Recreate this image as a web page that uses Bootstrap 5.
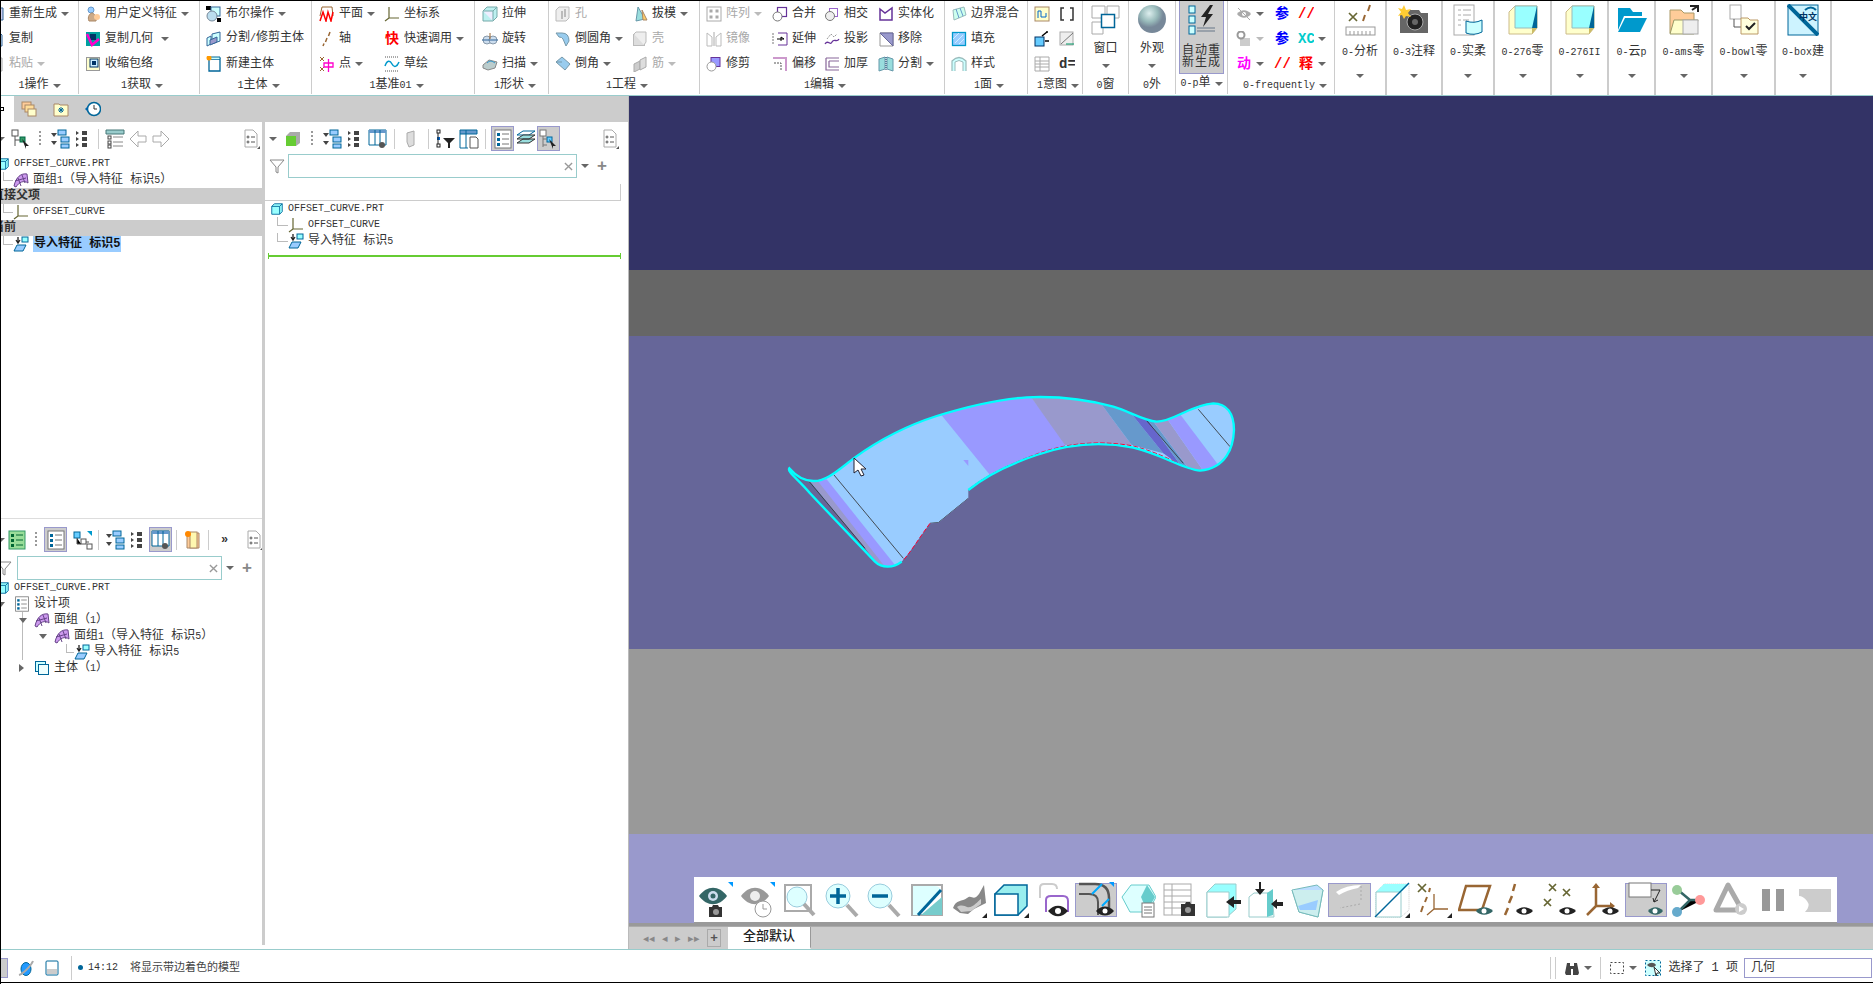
<!DOCTYPE html>
<html lang="zh">
<head>
<meta charset="utf-8">
<title>OFFSET_CURVE</title>
<link href="https://cdn.jsdelivr.net/npm/bootstrap@5.3.0/dist/css/bootstrap.min.css" rel="stylesheet">
<style>
html,body{height:100%;margin:0;overflow:hidden}
body{font:12px/16px "Liberation Mono","Noto Sans CJK SC",monospace;color:#333;background:#fff}
.lat{font-size:10px}
.shell{width:1873px;height:984px;border-left:1px solid #000;border-top:1px solid #000;overflow:hidden}
.ic{width:16px;height:16px;flex:none;display:block}
.ic-sm{width:14px;height:14px;flex:none;display:block}
.ic-tool{width:20px;height:20px;flex:none;display:block}
.ic-big{width:32px;height:32px;flex:none;display:block}
.ic-cv{width:36px;height:36px;flex:none;display:block}
.tri{display:inline-block;flex:none;width:0;height:0;border-left:4px solid transparent;border-right:4px solid transparent;border-top:4px solid #666}
.off{color:#a9a9a9}
.off .tri,.tri.off{border-top-color:#bbb}

.ribbon{height:95px;border-bottom:1px solid #99cccc;background:#fff;overflow:hidden}
.rg{height:93px;border-right:1px solid #ccc;flex:none;overflow:hidden}
.rg-body{height:75px;display:grid;grid-template-rows:25px 25px 25px;grid-auto-flow:column;white-space:nowrap}
.rg-foot{height:19px;display:flex;align-items:center;justify-content:center;gap:4px;white-space:nowrap}
.rit{display:flex;align-items:center;gap:4px;min-width:0}
.g1{width:78px}.g1 .rg-body{grid-template-columns:78px;margin-left:-12px}
.g2{width:121px;padding-left:6px}.g3{width:112px;padding-left:6px}
.g4{width:163px;padding-left:7px}.g4 .rg-body{grid-template-columns:65px 90px}
.g5{width:74px;padding-left:7px}
.g6{width:151px;padding-left:6px}.g6 .rg-body{grid-template-columns:77px 68px}
.g7{width:245px;padding-left:6px}.g7 .rg-body{grid-template-columns:66px 52px 54px 72px}
.g8{width:83px;padding-left:6px}
.g9{width:55px;padding-left:6px}.g9 .rg-body{grid-template-columns:25px 24px}
.g10{width:46px}.g11{width:47px}.g12{width:52px}
.g14{width:107px;padding-left:8px}.g14 .rg-body{grid-template-columns:38px 24px 30px;font-weight:700}
.rcol{height:75px;display:flex;flex-direction:column;align-items:center;line-height:13px;text-align:center}
.rcol-on{background:#ccc;border:1px solid #9999cc;border-top:0;margin:0 3px;height:73px;font-size:12px;line-height:12px;letter-spacing:1px}
.rcol .ic-big{margin-top:3px;margin-bottom:7px}
.rcol-on .ic-big{margin-bottom:9px}
.rb{height:95px;flex:none;border-right:2px solid #ccc;display:flex;flex-direction:column;align-items:center;padding-top:3px;white-space:nowrap}
.rb span.lbl{margin:8px 0 13px;line-height:16px}
.w52{width:52px}.w56{width:56px}.w57{width:57px}.w47{width:47px}.w63{width:63px}
.c-red{color:#f00}.c-blue{color:#00f}.c-mag{color:#f0f}.c-cy{color:#0cc}
.glyph{width:16px;text-align:center;font-weight:700;flex:none;font-size:14px;overflow:hidden}

.midarea{height:853px}
.sidecol{width:628px;flex:none;background:#fff;border-right:1px solid #bbb}
.tabstrip{height:26px;background:#ccc;align-items:center;gap:12px;padding-left:5px}
.tabstub{width:13px;height:26px;background:#fff;margin-left:-5px;margin-right:-5px;position:relative;display:flex;align-items:center}
.tabstub i{display:block;width:4px;height:4px;border:1px solid #000;margin-left:-1px}
.vbar{width:3px;flex:none;background:#ccc;height:823px}
.pane-a{width:261px;flex:none}
.pane-b{flex:1 1 auto;padding-right:7px}
.pane-b .tsep{margin:0 5px}
.upper{height:397px;border-bottom:1px solid #ddd;overflow:hidden}
.strip{height:33px;display:flex;align-items:center;overflow:hidden}
.strip-tall{height:34px}
.cell{width:23px;flex:none;display:flex;justify-content:center;align-items:center}
.cell.on{height:25px;background:#ccc;border:1px solid #9999cc}
.cell.nar{width:16px}
.dots{width:2px;height:16px;flex:none;margin:0 7px;background:repeating-linear-gradient(#999 0 2px,transparent 2px 4px)}
.tsep{width:1px;height:20px;background:#ccc;flex:none;margin:0 4px}
.flt{height:24px;display:flex;align-items:center}
.flt-up{margin-top:-1px}
.fbox{height:100%;border:1px solid #99cccc;display:flex;align-items:center;justify-content:flex-end;padding-right:3px;flex:none}
.fbox-a{width:205px;margin-left:5px}
.fbox-b{width:289px;margin-left:3px}
.plus{font:700 17px/16px "Liberation Sans",sans-serif;color:#888}
.emptyrow{height:17px;margin-top:6px;border-right:1px solid #ccc;border-bottom:1px solid #ccc}
.tr{height:16px;display:flex;align-items:center;white-space:nowrap;position:relative}
.tr>svg{margin-right:4px}
.hd{background:#ccc;font-weight:700;overflow:hidden}
.hd span{margin-left:-9px}
.in0{padding-left:0}.in1{padding-left:13px}.in2{padding-left:33px}.in3{padding-left:53px}.in4{padding-left:73px}
.in5{padding-left:23px}.in6{padding-left:5px}
.lnk{width:8px;height:9px;margin-left:-8px;margin-top:-7px;border-left:1px solid #bbb;border-bottom:1px solid #bbb;flex:none}
.lnk-far{width:10px;margin-left:-11px}
.lnk-wide{margin-left:-11px;width:11px}
.twi{width:0;height:0;flex:none;margin-left:-15px;margin-right:7px;border-left:4px solid transparent;border-right:4px solid transparent;border-top:5px solid #666}
.twi.shut{border-top:4px solid transparent;border-bottom:4px solid transparent;border-left:5px solid #666;border-right:0;margin-right:10px}
.twi-first{margin-left:-17px;margin-right:9px}
.guide{background:linear-gradient(#bbb,#bbb) 21px 0/1px 100% no-repeat}
.sel{background:#99ccff;color:#111;font-weight:700;padding:0 1px}
.greenline{height:2px;background:#66cc33;margin:6px 0 0 3px;position:relative}
.greenline::before,.greenline::after{content:"";position:absolute;top:-2px;width:1px;height:6px;background:#66cc33}
.greenline::before{left:0}.greenline::after{right:0}
.trim-l{margin-left:-4px}
.prt-a{margin-left:-5px}

.viewcol{flex:1 1 auto;min-width:0}
.vport{height:830px;position:relative;overflow:hidden;border-bottom:3px solid #999}
.bd1{height:174px;background:#333366}.bd2{height:66px;background:#666666}.bd3{height:313px;background:#666699}.bd4{height:185px;background:#999999}.bd5{height:89px;background:#9999cc}
.modelpic{position:absolute;left:141px;top:284px;width:480px;height:200px}
.ptr{position:absolute;left:224px;top:361px;width:14px;height:20px}
.floatbar{position:absolute;left:65px;top:781px;width:1143px;height:47px;background:#fff;display:flex;align-items:center;border-bottom:2px solid #999}
.fb{width:42.3px;height:34px;display:flex;align-items:center;justify-content:center;flex:none}
.fb.on{background:#ccc;border:1px solid #9999cc}
.tabrow{height:23px;background:#ccc;border-top:1px solid #aaa;align-items:stretch}
.nbtns{width:99px;flex:none;display:flex;align-items:center;justify-content:flex-end;gap:7px;color:#888;padding-right:7px;font:11px/10px "Liberation Sans",sans-serif}
.addt{width:14px;height:18px;border:1px solid #aaa;text-align:center;font:700 13px/15px "Liberation Sans",sans-serif;color:#555}
.tabcur{width:83px;flex:none;background:#fff;text-align:center;font-size:13px;line-height:19px;color:#222;font-weight:500;border-right:1px solid #999;border-bottom:2px solid #fff}

.statusbar{height:34px;border-top:1px solid #99cccc;border-bottom:1px solid #000;background:#fff;align-items:center;white-space:nowrap;font-size:11px;padding-top:3px}
.sl{width:71px;height:24px;border-right:1px solid #ccc;display:flex;align-items:center;gap:10px;flex:none;padding-left:16px;position:relative}
.sstub{width:8px;height:20px;margin-left:-17px;background:#ccc;border:1px solid #9999cc;border-left:0;flex:none}
.sdot{width:5px;height:5px;border-radius:50%;background:#006699;margin:0 5px 0 6px;flex:none}
.smsg{margin-left:12px;color:#444}
.vs{width:1px;height:22px;background:#ccc;flex:none}
.sinput{width:128px;height:20px;border:1px solid #9999cc;font-size:12px;line-height:18px;padding-left:6px;flex:none;margin:0 1px 0 6px}
.stxt{font-size:12px;flex:none;margin-left:7px}
</style>
</head>
<body>
<svg width="0" height="0" class="position-absolute">
<defs>
<symbol id="cube" viewBox="0 0 16 16"><path d="M2 5 5 2h9v9l-3 3H2z" fill="#99ffff" stroke="#006699"/><path d="M2 5h9v9M11 5l3-3" fill="none" stroke="#006699"/></symbol>
<symbol id="cubes" viewBox="0 0 16 16"><rect x="1.500" y="1.500" width="10" height="10" fill="#ccffff" stroke="#006699"/><rect x="4.500" y="4.500" width="10" height="10" fill="#eeffff" stroke="#006699"/></symbol>
<symbol id="regen" viewBox="0 0 16 16"><path d="M2 2h12v12H2z" fill="#cce" stroke="#369"/></symbol>
<symbol id="doc" viewBox="0 0 16 16"><path d="M3 1h7l3 3v11H3z" fill="#def" stroke="#369"/><path d="M5 6h6M5 9h6M5 12h6" stroke="#369"/></symbol>
<symbol id="paste" viewBox="0 0 16 16"><path d="M3 2h10v13H3z" fill="#eee" stroke="#aaa"/><path d="M5 6h6M5 9h6M5 12h6" stroke="#bbb"/></symbol>
<symbol id="udf" viewBox="0 0 16 16"><circle cx="6" cy="4" r="3" fill="#9cf" stroke="#69c"/><path d="M4 15c-2-4 1-8 3-8s5 4 4 8z" fill="#ca8" stroke="#a86"/><circle cx="12" cy="11" r="3" fill="#fc9"/></symbol>
<symbol id="cgeom" viewBox="0 0 16 16"><rect x="1" y="1" width="14" height="14" fill="#00a0a0"/><rect x="5" y="3" width="6" height="6" fill="#036"/><path d="M2 3l5 11 7-6" fill="none" stroke="#f0c" stroke-width="2.500"/></symbol>
<symbol id="shrink" viewBox="0 0 16 16"><rect x="1.500" y="1.500" width="13" height="13" fill="#ffffcc" stroke="#999"/><rect x="5" y="3" width="8" height="8" fill="#cef" stroke="#036"/><rect x="7" y="5" width="4" height="4" fill="#036"/></symbol>
<symbol id="bool" viewBox="0 0 16 16"><rect x="0" y="0" width="5" height="4" fill="#000"/><rect x="11" y="12" width="4" height="4" fill="#000"/><rect x="5" y="1" width="9" height="9" fill="#cff" stroke="#369"/><circle cx="6" cy="10" r="5" fill="#bde" stroke="#789"/></symbol>
<symbol id="split" viewBox="0 0 16 16"><path d="M1 7l4-2v8l-4 2z M6 3l8-2v9l-8 3z" fill="#cff" stroke="#369"/><path d="M4 9l7-3v5l-7 3z" fill="#99c" stroke="#369"/></symbol>
<symbol id="newb" viewBox="0 0 16 16"><path d="M3 3h11v12H3z" fill="#fff" stroke="#069" stroke-width="1.300"/><path d="M3 3l2-2h9v2" fill="#cff" stroke="#069"/><circle cx="3" cy="2" r="2.500" fill="#f90"/></symbol>
<symbol id="plane" viewBox="0 0 16 16"><path d="M3 1h10l1 9M3 1L1 10" fill="none" stroke="#963"/><path d="M1 15 4 6l3 9 2-9 3 9 2-9" fill="none" stroke="#f00" stroke-width="1.500"/></symbol>
<symbol id="csys" viewBox="0 0 16 16"><path d="M5 1v11H15M5 12l-4 3" fill="none" stroke="#663" stroke-width="1.200"/></symbol>
<symbol id="axis" viewBox="0 0 16 16"><path d="M11 1 9.500 5M8 7 6.500 11M5 12.500 4 15" stroke="#963" stroke-width="1.500"/></symbol>
<symbol id="point" viewBox="0 0 16 16"><path d="M1 1l4 4M5 1 1 5M1 11l4 4M5 11l-4 4" stroke="#963"/><path d="M5 7h9v4H5z M9.500 3v13" fill="none" stroke="#f0c" stroke-width="1.300"/></symbol>
<symbol id="sketch" viewBox="0 0 16 16"><path d="M1 1h14M1 15h14" stroke="#555" stroke-dasharray="1 1"/><path d="M1 10c2-6 5-6 7-2s5 3 7-2" fill="none" stroke="#09c" stroke-width="1.500"/></symbol>
<symbol id="extr" viewBox="0 0 16 16"><path d="M1 5 5 1h10v10l-4 4H1z" fill="#bdf0f0" stroke="#7aa"/><path d="M1 5h10v10M11 5l4-4" fill="#eef" stroke="#7aa"/></symbol>
<symbol id="rev" viewBox="0 0 16 16"><ellipse cx="5" cy="9" rx="4" ry="4" fill="#cde" stroke="#89a"/><ellipse cx="11" cy="9" rx="4" ry="4" fill="#cde" stroke="#89a"/><path d="M0 9h16" stroke="#369"/><path d="M8 2v6" stroke="#963"/></symbol>
<symbol id="sweep" viewBox="0 0 16 16"><path d="M1 9l6-5 8 2-2 6-7 2-5-2z" fill="#bcc" stroke="#888"/><path d="M5 7c3-3 5-2 8 0" fill="none" stroke="#39c"/></symbol>
<symbol id="hole" viewBox="0 0 16 16"><path d="M1 4l3-3h10v11l-3 3H1z" fill="#eee" stroke="#bbb"/><path d="M7 5v8M10 3v8" stroke="#bbb" stroke-width="2"/></symbol>
<symbol id="draft" viewBox="0 0 16 16"><path d="M6 1l7 12-9 2z" fill="#9dd" stroke="#69a"/><path d="M10 4l5 10h-4z" fill="#fc6" stroke="#a86"/></symbol>
<symbol id="round" viewBox="0 0 16 16"><path d="M1 2h6q7 0 7 8l-3 5-3-7q-1-2-4-2z" fill="#9ce" stroke="#79a"/></symbol>
<symbol id="cham" viewBox="0 0 16 16"><path d="M1 6l6-5 8 7-5 6z" fill="#9ce" stroke="#79a"/><path d="M1 6h6" stroke="#79a"/></symbol>
<symbol id="shell" viewBox="0 0 16 16"><rect x="1.500" y="3.500" width="11" height="11" fill="#ddd" stroke="#bbb"/><path d="M2 3l2-2h10v10l-2 3" fill="#eee" stroke="#bbb"/></symbol>
<symbol id="rib" viewBox="0 0 16 16"><path d="M2 8l6-3v8l-6 3z" fill="#ccc" stroke="#aaa"/><path d="M8 4l6-3v10l-6 3z" fill="#ddd" stroke="#aaa"/></symbol>
<symbol id="pat" viewBox="0 0 16 16"><rect x="1" y="1" width="14" height="14" fill="#fff" stroke="#aaa"/><g fill="#aaa"><rect x="3.500" y="3.500" width="3" height="3"/><rect x="9.500" y="3.500" width="3" height="3"/><rect x="3.500" y="9.500" width="3" height="3"/><rect x="9.500" y="9.500" width="3" height="3"/></g></symbol>
<symbol id="mirr" viewBox="0 0 16 16"><path d="M1 2l5 4v9H1zM15 2l-5 4v9h5z" fill="#fff" stroke="#bbb"/><path d="M8 1v14" stroke="#aaa"/></symbol>
<symbol id="merge" viewBox="0 0 16 16"><rect x="5.500" y="1.500" width="9" height="9" fill="#fff" stroke="#639" stroke-width="1.200"/><circle cx="5.500" cy="10.500" r="4.500" fill="#fff" stroke="#777"/></symbol>
<symbol id="inter" viewBox="0 0 16 16"><rect x="5.500" y="2.500" width="8" height="8" fill="#fff" stroke="#96c"/><circle cx="6" cy="10" r="4.500" fill="#eee" stroke="#777"/></symbol>
<symbol id="trim" viewBox="0 0 16 16"><rect x="5" y="1.500" width="9" height="9" fill="#99f" stroke="#639"/><circle cx="5.500" cy="10.500" r="4.500" fill="#fff" stroke="#999"/></symbol>
<symbol id="ext" viewBox="0 0 16 16"><path d="M6 2h9v12H6" fill="none" stroke="#639"/><path d="M1 2v12" stroke="#777" stroke-dasharray="2 1"/><path d="M5 8h7l-3-2v4" fill="none" stroke="#000"/></symbol>
<symbol id="proj" viewBox="0 0 16 16"><path d="M1 13c3-5 5 2 7-2s5 1 7-3" fill="none" stroke="#639" stroke-width="1.300"/><path d="M3 8l4-5 3 3 3-3" fill="none" stroke="#999" stroke-dasharray="2 1"/></symbol>
<symbol id="offs" viewBox="0 0 16 16"><path d="M1 2h13v13" fill="none" stroke="#c9c" stroke-width="2"/><path d="M2 7h7v8" fill="none" stroke="#555" stroke-dasharray="2 1"/></symbol>
<symbol id="thick" viewBox="0 0 16 16"><path d="M2 2h13M2 2v12h13M5 5h10M5 5v6h10" fill="none" stroke="#869" stroke-width="1.200"/></symbol>
<symbol id="solid" viewBox="0 0 16 16"><path d="M2 3l5 4 7-5v12H2z" fill="#fff" stroke="#639" stroke-width="1.500"/></symbol>
<symbol id="remv" viewBox="0 0 16 16"><path d="M2 2h13v13H2z" fill="#fff" stroke="#999"/><path d="M2 2h13v13z" fill="#99c" stroke="#669"/></symbol>
<symbol id="splt" viewBox="0 0 16 16"><path d="M1 3l6-2v12l-6 2zM9 1l6 2v12l-6-2z" fill="#9dd" stroke="#69a"/><path d="M8 1v14" stroke="#036" stroke-dasharray="1 1"/></symbol>
<symbol id="blend" viewBox="0 0 16 16"><path d="M2 4l11-3 2 8-12 5z" fill="#cfe" stroke="#9bb"/><path d="M5 3l3 9M9 2l3 8" stroke="#69c"/></symbol>
<symbol id="fill" viewBox="0 0 16 16"><rect x="1.500" y="1.500" width="13" height="13" fill="#9cf" stroke="#09c" stroke-width="1.300"/><path d="M2 8l6-6M4 12l8-8M8 13l5-5" stroke="#cef"/></symbol>
<symbol id="style" viewBox="0 0 16 16"><path d="M1 15V5q7-7 14 0v10" fill="#cff" stroke="#9bb" stroke-width="1.200"/><path d="M4 15V6q4-3 8 0v9" fill="#fff" stroke="#9bb"/></symbol>
<symbol id="sk1" viewBox="0 0 16 16"><rect x="1" y="1" width="14" height="14" fill="#ffc" stroke="#a86"/><path d="M4 12V5h3v6h5V7" fill="none" stroke="#06c"/></symbol>
<symbol id="brk" viewBox="0 0 16 16"><path d="M5 2H2v12h3M11 2h3v12h-3" fill="none" stroke="#333" stroke-width="1.500"/></symbol>
<symbol id="mv" viewBox="0 0 16 16"><rect x="1" y="6" width="9" height="9" fill="#6cf" stroke="#036"/><path d="M8 5l5-4M12 1l2 0M11 10h4" stroke="#000" stroke-width="1.500"/></symbol>
<symbol id="rel" viewBox="0 0 16 16"><rect x="1" y="1" width="13" height="13" fill="#eee" stroke="#aaa"/><path d="M2 13 14 2" stroke="#777"/><path d="M7 13h8" stroke="#096"/></symbol>
<symbol id="tbl" viewBox="0 0 16 16"><path d="M1 1h14v14H1zM1 5h14M1 8h14M1 11h14M6 1v14" fill="#fff" stroke="#aaa"/></symbol>
<symbol id="ws" viewBox="0 0 32 32"><path d="M2 2h13v12H2zM17 2h12v12H17zM2 18h11v12H2z" fill="#fff" stroke="#aaa"/><rect x="11.500" y="10.500" width="13" height="13" fill="#fff" stroke="#069" stroke-width="1.500"/></symbol>
<symbol id="sph" viewBox="0 0 32 32"><defs><radialGradient id="sg" cx=".4" cy=".3"><stop offset="0" stop-color="#dee"/><stop offset=".6" stop-color="#9bb"/><stop offset="1" stop-color="#789"/></radialGradient></defs><circle cx="16" cy="15" r="14" fill="url(#sg)"/></symbol>
<symbol id="auto" viewBox="0 0 32 32"><g fill="#cff" stroke="#069"><rect x="3" y="2" width="6" height="7"/><rect x="3" y="12" width="6" height="7"/><rect x="3" y="22" width="6" height="8"/></g><path d="M24 1 15 13h5l-3 10 10-13h-5l5-9z" fill="#222"/><path d="M11 27h18M11 24h18" stroke="#678"/></symbol>
<symbol id="eyex" viewBox="0 0 16 16"><path d="M1 8c4-5 10-5 14 0-4 5-10 5-14 0z" fill="#aaa"/><circle cx="8" cy="8" r="2" fill="#fff"/><path d="M2 2l12 12" stroke="#aaa"/></symbol>
<symbol id="mdis" viewBox="0 0 16 16"><rect x="4" y="7" width="10" height="8" fill="#ccc"/><circle cx="5" cy="4" r="3.500" fill="none" stroke="#999" stroke-width="2"/></symbol>
<symbol id="ana" viewBox="0 0 32 32"><path d="M5 9l8 8M13 9l-8 8" stroke="#663" stroke-width="1.700"/><path d="M26 1l-2 6M21 11l-2 6" stroke="#963" stroke-width="2"/><rect x="2" y="23" width="29" height="8" fill="#fff" stroke="#999"/><path d="M6 27v4M10 27v4M14 27v4M18 27v4M22 27v4M26 27v4" stroke="#999"/></symbol>
<symbol id="cam" viewBox="0 0 32 32"><path d="M2 9h7l3-3h9l2 3h7v20H2z" fill="#666"/><circle cx="17" cy="18" r="8" fill="#222" stroke="#aaa"/><circle cx="17" cy="18" r="3" fill="#666"/><path d="M6 1l2 5 5-1-3 4 3 4-5-1-2 3-2-4-4 1 3-4-3-4 4 1z" fill="#fc3"/></symbol>
<symbol id="rep" viewBox="0 0 32 32"><rect x="2" y="1" width="20" height="30" fill="#fff" stroke="#aaa"/><path d="M6 6h3M11 6h8M6 11h3M11 11h8M6 16h3M11 16h6M6 21h3" stroke="#aaa"/><path d="M14 17q8 3 16-1v12q-8 4-16 1z" fill="#cff" stroke="#069"/></symbol>
<symbol id="bx" viewBox="0 0 32 32"><path d="M2 8l6-6h22v22l-5 6H2z" fill="#ffffcc" stroke="#cb8"/><path d="M8 2h22v22H8z" fill="#9ff" stroke="#9bb"/><path d="M25 24l5 0v-22" fill="#069"/><path d="M25 24h5l-5 6z" fill="#cb6"/></symbol>
<symbol id="fold" viewBox="0 0 32 32"><path d="M2 4h12l3 4h9v4H8L2 26z" fill="#09c"/><path d="M9 14h22l-7 14H2z" fill="#09c"/></symbol>
<symbol id="fdx" viewBox="0 0 32 32"><path d="M2 6h11l3 3h10v20H2z" fill="#fc9" stroke="#a96"/><path d="M2 30l4-14h24l-4 14z" fill="#ffc" stroke="#996"/><rect x="15" y="16" width="15" height="14" fill="#eee" stroke="#aaa"/><path d="M22 2h8v6M30 2l-6 4" fill="none" stroke="#222" stroke-width="2"/></symbol>
<symbol id="fdc" viewBox="0 0 32 32"><rect x="2" y="1" width="11" height="14" fill="#fff" stroke="#aaa"/><path d="M6 15v8h8" fill="none" stroke="#555"/><path d="M13 14h7l2 2h8v14H13z" fill="#ffd" stroke="#b96"/><path d="M18 22l3 3 6-6" fill="none" stroke="#222" stroke-width="2"/></symbol>
<symbol id="bxz" viewBox="0 0 32 32"><rect x="1" y="1" width="30" height="30" fill="#cdf3ff" stroke="#069"/><path d="M1 1l30 30" stroke="#069" stroke-width="4"/><path d="M18 6q6-5 11 0" fill="none" stroke="#069" stroke-width="2"/><text x="12" y="16" font-size="9" font-weight="700" fill="#036" font-family="Noto Sans CJK SC,sans-serif">中文</text></symbol>
<symbol id="treef" viewBox="0 0 20 20"><rect x="1" y="1" width="6" height="6" fill="#fff" stroke="#555"/><rect x="9" y="8" width="5" height="5" fill="#396" stroke="#064"/><path d="M4 7v10M4 11h5" stroke="#555"/><path d="M11 10l7 7-3 0 0 3z" fill="#222"/></symbol>
<symbol id="expd" viewBox="0 0 20 20"><path d="M1 4h6L4 8zM1 12h6l-3 4z" fill="#444"/><rect x="8" y="1" width="8" height="5" fill="#9cf" stroke="#069"/><rect x="11" y="8" width="8" height="5" fill="#9cf" stroke="#069"/><rect x="11" y="15" width="8" height="4" fill="#9cf" stroke="#069"/></symbol>
<symbol id="coll" viewBox="0 0 20 20"><g fill="#444"><path d="M3 2l3 2-3 2zM3 8l3 2-3 2zM3 14l3 2-3 2z"/><rect x="9" y="2" width="5" height="4" /><rect x="9" y="8" width="5" height="4"/><rect x="9" y="14" width="5" height="4"/></g></symbol>
<symbol id="lst" viewBox="0 0 20 20"><path d="M1 1h18v4H1z" fill="#9cc" stroke="#477"/><g fill="none" stroke="#444"><rect x="3" y="7" width="3" height="3"/><rect x="3" y="12" width="3" height="3"/><rect x="3" y="16" width="3" height="3"/></g><path d="M8 8h10M8 13h10M8 17h10" stroke="#888"/></symbol>
<symbol id="bk" viewBox="0 0 20 20"><path d="M2 10l8-8v5h8v6h-8v5z" fill="#fff" stroke="#aaa"/></symbol>
<symbol id="fw" viewBox="0 0 20 20"><path d="M18 10l-8-8v5H2v6h8v5z" fill="#fff" stroke="#aaa"/></symbol>
<symbol id="cfg" viewBox="0 0 20 20"><path d="M4 1h8l4 4v13H4z" fill="#fff" stroke="#aaa"/><circle cx="7" cy="8" r="1" fill="none" stroke="#555"/><circle cx="7" cy="13" r="1" fill="none" stroke="#555"/><path d="M10 8h4M10 13h4" stroke="#555"/><path d="M19 17v3h-3z" fill="#555"/></symbol>
<symbol id="cbg" viewBox="0 0 20 20"><path d="M3 7 7 3h10v11l-4 3H3z" fill="#aaa"/><path d="M3 7h10v10H3z" fill="#66cc33"/></symbol>
<symbol id="tbe" viewBox="0 0 20 20"><path d="M1 1h17v15H1z" fill="#fff" stroke="#069"/><path d="M1 1h17v3H1z" fill="#69c"/><path d="M7 1v15M12 1v15" stroke="#069"/><circle cx="14" cy="16" r="3" fill="#555"/></symbol>
<symbol id="hnd" viewBox="0 0 20 20"><path d="M5 4l7-2v14l-5 2-2-5z" fill="#ddd" stroke="#aaa"/></symbol>
<symbol id="fl" viewBox="0 0 20 20"><rect x="1" y="1" width="3" height="3" fill="none" stroke="#222"/><rect x="1" y="8" width="3" height="3" fill="#06c"/><rect x="1" y="15" width="3" height="3" fill="none" stroke="#222"/><path d="M2 4v11" stroke="#222"/><path d="M7 9h12l-5 5v5l-2 0v-5z" fill="#222"/></symbol>
<symbol id="tbd" viewBox="0 0 20 20"><path d="M1 1h17v4H1z" fill="#69c" stroke="#069"/><path d="M1 5v14h8M7 1v18" fill="none" stroke="#069"/><path d="M11 8h6l2 2v9h-8z" fill="#fff" stroke="#555"/></symbol>
<symbol id="dsg" viewBox="0 0 20 20"><rect x="2" y="1" width="16" height="18" fill="#fff" stroke="#777"/><g fill="#069"><rect x="4" y="4" width="3" height="3"/><rect x="4" y="9" width="3" height="3"/><rect x="4" y="14" width="3" height="3"/></g><path d="M9 5h7M9 10h7M9 15h7" stroke="#777"/></symbol>
<symbol id="layr" viewBox="0 0 20 20"><path d="M1 6l6-4h12l-6 4z" fill="#fff" stroke="#069"/><path d="M1 10l6-4h12l-6 4zM1 14l6-4h12l-6 4z" fill="#9dd" stroke="#333"/></symbol>
<symbol id="trh" viewBox="0 0 20 20"><rect x="1" y="1" width="6" height="6" fill="#fff" stroke="#777"/><rect x="8" y="8" width="5" height="5" fill="#6cf" stroke="#069"/><path d="M4 7v11M4 10h4M4 16h4" stroke="#777"/><path d="M10 10l7 7-3 0 0 3z" fill="#222"/></symbol>
<symbol id="dgn" viewBox="0 0 20 20"><rect x="2" y="1" width="16" height="18" fill="#9d9" stroke="#396"/><g fill="#063"><rect x="4" y="4" width="3" height="3"/><rect x="4" y="9" width="3" height="3"/><rect x="4" y="14" width="3" height="3"/></g><path d="M9 5h7M9 10h7M9 15h7" stroke="#063"/></symbol>
<symbol id="trc" viewBox="0 0 20 20"><rect x="1" y="2" width="6" height="6" fill="#6cf" stroke="#069"/><rect x="8" y="9" width="5" height="5" fill="#fff" stroke="#555"/><rect x="14" y="14" width="5" height="5" fill="#fff" stroke="#555"/><path d="M4 8v6h4M13 12h3" stroke="#555"/><path d="M14 1h5v5z" fill="#09c"/></symbol>
<symbol id="mdl" viewBox="0 0 20 20"><path d="M4 3h12v15H4z" fill="#fc9" stroke="#a86"/><rect x="7" y="2" width="7" height="16" fill="#fff8b0" stroke="#a86"/><circle cx="5" cy="4" r="3" fill="#f80"/></symbol>
<symbol id="gr" viewBox="0 0 16 16"><path d="M1 14C3 5 8 1 14 2l1 9c-4-3-9-1-12 4z" fill="#c9e" stroke="#648"/><path d="M5 6l3 8M9 3l3 8M2 9l11-3" stroke="#648"/></symbol>
<symbol id="imp" viewBox="0 0 16 16"><path d="M1 15l3-6h9l-3 6z" fill="#9cf" stroke="#069"/><rect x="9" y="1" width="6" height="5" fill="#9ff" stroke="#069"/><path d="M5 1v5M3 4l2 3 2-3" fill="none" stroke="#222" stroke-width="1.300"/></symbol>
<symbol id="funl" viewBox="0 0 16 16"><path d="M1 2h14L9 9v6l-2-1V9z" fill="#fff" stroke="#888"/></symbol>
<symbol id="xx" viewBox="0 0 10 10"><path d="M1 1l8 8M9 1 1 9" stroke="#999" stroke-width="1.500"/></symbol>
<symbol id="v1" viewBox="0 0 36 36"><path d="M2 14c8-11 20-11 28 0-8 11-20 11-28 0z" fill="#366"/><circle cx="16" cy="14" r="5" fill="#cde"/><circle cx="16" cy="14" r="2.500" fill="#366"/><path d="M12 25h3l1-2h5l1 2h3v10H12z" fill="#333"/><circle cx="19" cy="30" r="3" fill="#999"/><path d="M31 0h5v5z" fill="#09f"/></symbol>
<symbol id="v2" viewBox="0 0 36 36"><path d="M2 14c8-11 20-11 28 0-8 11-20 11-28 0z" fill="#999"/><circle cx="16" cy="14" r="5" fill="#eee"/><circle cx="24" cy="27" r="8" fill="#fff" stroke="#999"/><path d="M24 22v5h4" stroke="#999" fill="none"/><path d="M31 0h5v5z" fill="#09f"/></symbol>
<symbol id="v3" viewBox="0 0 36 36"><rect x="3" y="3" width="26" height="26" fill="#fff" stroke="#aaa" stroke-width="2"/><circle cx="15" cy="15" r="10" fill="#dff" stroke="#9cd"/><path d="M22 22l10 11" stroke="#aaa" stroke-width="4"/></symbol>
<symbol id="v4" viewBox="0 0 36 36"><circle cx="14" cy="14" r="12" fill="#dff" stroke="#9cd"/><path d="M14 6v16M6 14h16" stroke="#069" stroke-width="3.500"/><path d="M23 23l10 11" stroke="#aaa" stroke-width="4"/></symbol>
<symbol id="v5" viewBox="0 0 36 36"><circle cx="14" cy="14" r="12" fill="#dff" stroke="#9cd"/><path d="M6 14h16" stroke="#069" stroke-width="3.500"/><path d="M23 23l10 11" stroke="#aaa" stroke-width="4"/></symbol>
<symbol id="v6" viewBox="0 0 36 36"><rect x="3" y="3" width="30" height="30" fill="#fff" stroke="#aaa" stroke-width="2"/><path d="M4 4h22q6 0 6 6L10 33H4z" fill="#dff"/><path d="M32 8 9 33" stroke="#069" stroke-width="3"/><path d="M33 15v18H12z" fill="#7cc"/></symbol>
<symbol id="v7" viewBox="0 0 36 36"><path d="M2 26c3-9 9-6 14-10s6 4 12-4l5-9 2 18-12 6-6 5-8-1z" fill="#888"/><path d="M6 25c4-3 8-1 10 0 5 2 11-6 14-8v5l-10 7-10 1z" fill="#ccc"/><path d="M36 36v-5l-5 5z" fill="#222"/></symbol>
<symbol id="v8" viewBox="0 0 36 36"><path d="M2 12 11 3h23v21l-9 9H2z" fill="#9ee" stroke="#069" stroke-width="1.500"/><path d="M2 12h23v21H2z" fill="#fff" stroke="#069" stroke-width="1.500"/><path d="M36 36v-5l-5 5z" fill="#222"/></symbol>
<symbol id="v9" viewBox="0 0 36 36"><path d="M4 16V6q0-4 4-4h8q5 0 5 5" fill="none" stroke="#ccc" stroke-width="2"/><path d="M10 30V18q0-4 5-4h12q5 0 5 5v11" fill="none" stroke="#96c" stroke-width="2"/><path d="M12 29c6-7 14-7 20 0-6 7-14 7-20 0z" fill="#222"/><circle cx="22" cy="29" r="3" fill="#fff"/></symbol>
<symbol id="v10" viewBox="0 0 36 36"><path d="M1 2h16q14 0 14 14v10" fill="none" stroke="#555" stroke-width="2.500"/><path d="M1 12h10q9 0 9 8v13" fill="none" stroke="#555" stroke-width="2"/><path d="M14 12 24 2M24 24l7-7" stroke="#0af" stroke-width="2"/><path d="M18 29c5-6 13-6 18 0-5 6-13 6-18 0z" fill="#222"/><circle cx="27" cy="29" r="2.500" fill="#fff"/><path d="M31 0h5v5z" fill="#09f"/></symbol>
<symbol id="v11" viewBox="0 0 36 36"><path d="M2 15l9-12h18l7 12-8 15H10z" fill="#dff" stroke="#6cc"/><path d="M27 3l8 12-8 14-6-14z" fill="#6cc"/><rect x="22" y="21" width="12" height="14" fill="#fff" stroke="#777"/><path d="M24 25h8M24 28h8M24 31h8" stroke="#777"/></symbol>
<symbol id="v12" viewBox="0 0 36 36"><rect x="2" y="2" width="27" height="31" fill="#fff" stroke="#aaa"/><path d="M2 8h27M2 14h27M2 20h27M2 26h27M10 2v31" stroke="#aaa"/><path d="M19 22h4l1-2h4l1 2h4v12H19z" fill="#333"/><circle cx="26" cy="28" r="3" fill="#999"/></symbol>
<symbol id="v13" viewBox="0 0 36 36"><path d="M2 10l8-8h21v25l-9 8H2z" fill="#9ff" stroke="#9cc"/><path d="M2 10h22v25H2z" fill="#fff" stroke="#9cc"/><path d="M36 18h-7v-4l-8 6 8 6v-4h7z" fill="#222"/></symbol>
<symbol id="v14" viewBox="0 0 36 36"><path d="M2 15l5-4h18l2 24H2z" fill="#fff" stroke="#9cc"/><path d="M20 11l6-4v26l-6 2z" fill="#6cc"/><path d="M12 0v7h-4l5 6 5-6h-4V0z" fill="#222"/><path d="M36 20h-6v-3l-6 5 6 5v-3h6z" fill="#222"/></symbol>
<symbol id="v15" viewBox="0 0 36 36"><path d="M3 8l25-5 6 5-5 27-19-5z" fill="#bdf" stroke="#7bb"/><path d="M3 8l7 22 19 5 5-27" fill="#cee" stroke="#7bb"/><path d="M9 24l20-6-2 10-16 0z" fill="#9cf"/></symbol>
<symbol id="v16" viewBox="0 0 36 36"><path d="M4 10q10-7 25-7L26 6Q15 8 7 13z" fill="#fff"/><path d="M29 4v16M28 22L8 26" stroke="#aaa" stroke-dasharray="2 2"/></symbol>
<symbol id="v17" viewBox="0 0 36 36"><path d="M2 10 10 2h25v26l-8 7H2z" fill="#fff" stroke="#ccc" stroke-dasharray="1 1"/><path d="M2 10 10 2h25L27 10z" fill="#9ff"/><path d="M2 10h25v25H2z" fill="#fff" stroke="#9cc"/><path d="M1 35 35 1" stroke="#069" stroke-width="1.500"/><path d="M36 36v-5l-5 5z" fill="#222"/></symbol>
<symbol id="v18" viewBox="0 0 36 36"><path d="M2 2l8 8M10 2l-8 8" stroke="#663" stroke-width="1.700"/><path d="M14 6l-1 4M11 15l-2 5M7 24l-2 6" stroke="#963" stroke-width="2"/><path d="M18 12v15M18 27h14M18 27l-7 6" fill="none" stroke="#963" stroke-width="1.300"/><path d="M36 36v-5l-5 5z" fill="#222"/></symbol>
<symbol id="v19" viewBox="0 0 36 36"><path d="M8 4h24l-8 24H1z" fill="none" stroke="#963" stroke-width="2.500"/><path d="M18 29c4-5 12-5 17 0-5 5-13 5-17 0z" fill="#366"/><circle cx="26" cy="29" r="2.500" fill="#fff"/></symbol>
<symbol id="v20" viewBox="0 0 36 36"><path d="M14 2l-2 7M11 14l-3 7M7 26l-3 7" stroke="#963" stroke-width="2.500"/><path d="M15 29c4-5 12-5 17 0-5 5-13 5-17 0z" fill="#222"/><circle cx="23" cy="29" r="2.500" fill="#fff"/></symbol>
<symbol id="v21" viewBox="0 0 36 36"><path d="M6 2l7 7M13 2l-7 7M20 7l7 7M27 7l-7 7M1 17l7 7M8 17l-7 7" stroke="#663" stroke-width="1.700"/><path d="M16 29c4-5 12-5 17 0-5 5-13 5-17 0z" fill="#222"/><circle cx="24" cy="29" r="2.500" fill="#fff"/></symbol>
<symbol id="v22" viewBox="0 0 36 36"><path d="M11 3v21h17M11 24l-9 9" fill="none" stroke="#963" stroke-width="2.500"/><path d="M7 6l4-5 4 5zM25 20l5 4-5 4z" fill="#963"/><path d="M17 29c4-5 12-5 17 0-5 5-13 5-17 0z" fill="#222"/><circle cx="25" cy="29" r="2.500" fill="#fff"/></symbol>
<symbol id="v23" viewBox="0 0 36 36"><rect x="1" y="1" width="22" height="14" fill="#fff" stroke="#777"/><path d="M23 8h9l-6 12M26 20l-1-4M26 20l4-2" fill="none" stroke="#222"/><path d="M20 29c4-5 11-5 15 0-4 5-11 5-15 0z" fill="#366"/><circle cx="27" cy="29" r="2.500" fill="#fff"/></symbol>
<symbol id="v24" viewBox="0 0 36 36"><path d="M8 8l12 10M8 30l12-12h12" stroke="#366" stroke-width="2.500"/><circle cx="7" cy="8" r="5" fill="#9c9"/><circle cx="7" cy="30" r="5" fill="#6ac"/><circle cx="30" cy="18" r="5" fill="#f99"/></symbol>
<symbol id="v25" viewBox="0 0 36 36"><path d="M16 3 30 28H4z" fill="none" stroke="#aaa" stroke-width="5" stroke-linejoin="round"/><circle cx="29" cy="27" r="6" fill="#ccc"/><path d="M27 24l5 3-5 3z" fill="#fff"/></symbol>
<symbol id="v26" viewBox="0 0 36 36"><rect x="7" y="7" width="8" height="22" fill="#999"/><rect x="21" y="7" width="8" height="22" fill="#999"/></symbol>
<symbol id="v27" viewBox="0 0 36 36"><path d="M2 7h32v23H8q6-6 2-11t-8-5z" fill="#ccc"/></symbol>
<symbol id="bino" viewBox="0 0 16 16"><path d="M1 13l2-10h3v3h4V3h3l2 10-1 2H9V9H7v6H2z" fill="#444"/></symbol>
<symbol id="dash" viewBox="0 0 16 16"><rect x="1.500" y="2.500" width="13" height="11" fill="none" stroke="#444" stroke-dasharray="2 2"/></symbol>
<symbol id="esel" viewBox="0 0 16 16"><rect x=".5" y=".5" width="15" height="15" fill="#cff" stroke="#069" stroke-dasharray="2 2"/><path d="M2 5c3-3 7-3 9 0-2 3-6 3-9 0z" fill="#555"/><path d="M9 7l6 6-3 0-1 3z" fill="#fff" stroke="#333"/></symbol>
<symbol id="glob" viewBox="0 0 16 16"><ellipse cx="8" cy="9" rx="5" ry="6.500" fill="#29f" stroke="#069"/><path d="M1 15c4-1 12-9 14-14" fill="none" stroke="#aaa" stroke-width="2"/></symbol>
<symbol id="pg" viewBox="0 0 16 16"><rect x="2" y="1" width="12" height="14" rx="1" fill="#fff" stroke="#069"/><rect x="3" y="9" width="10" height="5" fill="#ccc"/></symbol>
<symbol id="tab1" viewBox="0 0 16 16"><rect x="1" y="1" width="9" height="7" fill="#fc9" stroke="#a86"/><rect x="4" y="4" width="9" height="7" fill="#fd9" stroke="#a86"/><rect x="7" y="8" width="8" height="7" fill="#ffc" stroke="#a86"/></symbol>
<symbol id="tab2" viewBox="0 0 16 16"><path d="M1 3h5l1 1h8v11H1z" fill="#ffc" stroke="#a86"/><path d="M8 6v6M5 9h6M6 7l4 4M10 7l-4 4" stroke="#069"/></symbol>
<symbol id="tab3" viewBox="0 0 16 16"><circle cx="9" cy="8" r="6.500" fill="#fff" stroke="#069" stroke-width="1.500"/><path d="M9 4v4h3" stroke="#333" fill="none"/><path d="M0 8l3-3v6z" fill="#06a"/></symbol>
</defs>
</svg>

<div class="shell d-flex flex-column">
  <div class="ribbon d-flex">
    <div class="rg g1"><div class="rg-body">
      <div class="rit"><svg class="ic"><use href="#regen"/></svg><span>重新生成</span><i class="tri"></i></div>
      <div class="rit"><svg class="ic"><use href="#doc"/></svg><span>复制</span></div>
      <div class="rit off"><svg class="ic"><use href="#paste"/></svg><span>粘贴</span><i class="tri"></i></div>
    </div><div class="rg-foot"><span><span class="lat">1</span>操作</span><i class="tri"></i></div></div>
    <div class="rg g2"><div class="rg-body">
      <div class="rit"><svg class="ic"><use href="#udf"/></svg><span>用户定义特征</span><i class="tri"></i></div>
      <div class="rit"><svg class="ic"><use href="#cgeom"/></svg><span>复制几何</span><i class="tri ms-1"></i></div>
      <div class="rit"><svg class="ic"><use href="#shrink"/></svg><span>收缩包络</span></div>
    </div><div class="rg-foot"><span><span class="lat">1</span>获取</span><i class="tri"></i></div></div>
    <div class="rg g3"><div class="rg-body">
      <div class="rit"><svg class="ic"><use href="#bool"/></svg><span>布尔操作</span><i class="tri"></i></div>
      <div class="rit"><svg class="ic"><use href="#split"/></svg><span>分割<span class="lat">/</span>修剪主体</span></div>
      <div class="rit"><svg class="ic"><use href="#newb"/></svg><span>新建主体</span></div>
    </div><div class="rg-foot"><span><span class="lat">1</span>主体</span><i class="tri"></i></div></div>
    <div class="rg g4"><div class="rg-body">
      <div class="rit"><svg class="ic"><use href="#plane"/></svg><span>平面</span><i class="tri"></i></div>
      <div class="rit"><svg class="ic"><use href="#axis"/></svg><span>轴</span></div>
      <div class="rit"><svg class="ic"><use href="#point"/></svg><span>点</span><i class="tri"></i></div>
      <div class="rit"><svg class="ic"><use href="#csys"/></svg><span>坐标系</span></div>
      <div class="rit"><span class="glyph c-red">快</span><span>快速调用</span><i class="tri"></i></div>
      <div class="rit"><svg class="ic"><use href="#sketch"/></svg><span>草绘</span></div>
    </div><div class="rg-foot"><span><span class="lat">1</span>基准<span class="lat">01</span></span><i class="tri"></i></div></div>
    <div class="rg g5"><div class="rg-body">
      <div class="rit"><svg class="ic"><use href="#extr"/></svg><span>拉伸</span></div>
      <div class="rit"><svg class="ic"><use href="#rev"/></svg><span>旋转</span></div>
      <div class="rit"><svg class="ic"><use href="#sweep"/></svg><span>扫描</span><i class="tri"></i></div>
    </div><div class="rg-foot"><span><span class="lat">1</span>形状</span><i class="tri"></i></div></div>
    <div class="rg g6"><div class="rg-body">
      <div class="rit off"><svg class="ic"><use href="#hole"/></svg><span>孔</span></div>
      <div class="rit"><svg class="ic"><use href="#round"/></svg><span>倒圆角</span><i class="tri"></i></div>
      <div class="rit"><svg class="ic"><use href="#cham"/></svg><span>倒角</span><i class="tri"></i></div>
      <div class="rit"><svg class="ic"><use href="#draft"/></svg><span>拔模</span><i class="tri"></i></div>
      <div class="rit off"><svg class="ic"><use href="#shell"/></svg><span>壳</span></div>
      <div class="rit off"><svg class="ic"><use href="#rib"/></svg><span>筋</span><i class="tri"></i></div>
    </div><div class="rg-foot"><span><span class="lat">1</span>工程</span><i class="tri"></i></div></div>
    <div class="rg g7"><div class="rg-body">
      <div class="rit off"><svg class="ic"><use href="#pat"/></svg><span>阵列</span><i class="tri"></i></div>
      <div class="rit off"><svg class="ic"><use href="#mirr"/></svg><span>镜像</span></div>
      <div class="rit"><svg class="ic"><use href="#trim"/></svg><span>修剪</span></div>
      <div class="rit"><svg class="ic"><use href="#merge"/></svg><span>合并</span></div>
      <div class="rit"><svg class="ic"><use href="#ext"/></svg><span>延伸</span></div>
      <div class="rit"><svg class="ic"><use href="#offs"/></svg><span>偏移</span></div>
      <div class="rit"><svg class="ic"><use href="#inter"/></svg><span>相交</span></div>
      <div class="rit"><svg class="ic"><use href="#proj"/></svg><span>投影</span></div>
      <div class="rit"><svg class="ic"><use href="#thick"/></svg><span>加厚</span></div>
      <div class="rit"><svg class="ic"><use href="#solid"/></svg><span>实体化</span></div>
      <div class="rit"><svg class="ic"><use href="#remv"/></svg><span>移除</span></div>
      <div class="rit"><svg class="ic"><use href="#splt"/></svg><span>分割</span><i class="tri"></i></div>
    </div><div class="rg-foot"><span><span class="lat">1</span>编辑</span><i class="tri"></i></div></div>
    <div class="rg g8"><div class="rg-body">
      <div class="rit"><svg class="ic"><use href="#blend"/></svg><span>边界混合</span></div>
      <div class="rit"><svg class="ic"><use href="#fill"/></svg><span>填充</span></div>
      <div class="rit"><svg class="ic"><use href="#style"/></svg><span>样式</span></div>
    </div><div class="rg-foot"><span><span class="lat">1</span>面</span><i class="tri"></i></div></div>
    <div class="rg g9"><div class="rg-body">
      <div class="rit"><svg class="ic"><use href="#sk1"/></svg></div>
      <div class="rit"><svg class="ic"><use href="#mv"/></svg></div>
      <div class="rit"><svg class="ic"><use href="#tbl"/></svg></div>
      <div class="rit"><svg class="ic"><use href="#brk"/></svg></div>
      <div class="rit"><svg class="ic"><use href="#rel"/></svg></div>
      <div class="rit fw-bold"><span class="glyph">d=</span></div>
    </div><div class="rg-foot"><span><span class="lat">1</span>意图</span><i class="tri"></i></div></div>
    <div class="rg g10"><div class="rcol"><svg class="ic-big"><use href="#ws"/></svg><span>窗口</span><i class="tri mt-2"></i></div><div class="rg-foot"><span><span class="lat">0</span>窗</span></div></div>
    <div class="rg g11"><div class="rcol"><svg class="ic-big"><use href="#sph"/></svg><span>外观</span><i class="tri mt-2"></i></div><div class="rg-foot"><span><span class="lat">0</span>外</span></div></div>
    <div class="rg g12"><div class="rcol rcol-on"><svg class="ic-big"><use href="#auto"/></svg><span>自动重<br>新生成</span></div><div class="rg-foot"><span><span class="lat">0-p</span>单</span><i class="tri"></i></div></div>
    <div class="rg g14"><div class="rg-body">
      <div class="rit fw-normal"><svg class="ic"><use href="#eyex"/></svg><i class="tri"></i></div>
      <div class="rit fw-normal"><svg class="ic"><use href="#mdis"/></svg><i class="tri off"></i></div>
      <div class="rit"><span class="glyph c-mag">动</span><i class="tri"></i></div>
      <div class="rit"><span class="glyph c-blue">参</span></div>
      <div class="rit"><span class="glyph c-blue">参</span></div>
      <div class="rit"><span class="glyph c-red">//</span></div>
      <div class="rit"><span class="glyph c-red">//</span></div>
      <div class="rit"><span class="glyph c-cy">XC</span><i class="tri"></i></div>
      <div class="rit"><span class="glyph c-red">释</span><i class="tri"></i></div>
    </div><div class="rg-foot"><span class="lat">0-frequently</span><i class="tri"></i></div></div>
    <div class="rb w52"><svg class="ic-big"><use href="#ana"/></svg><span class="lbl"><span class="lat">0-</span>分析</span><i class="tri"></i></div>
    <div class="rb w56"><svg class="ic-big"><use href="#cam"/></svg><span class="lbl"><span class="lat">0-3</span>注释</span><i class="tri"></i></div>
    <div class="rb w52"><svg class="ic-big"><use href="#rep"/></svg><span class="lbl"><span class="lat">0-</span>实柔</span><i class="tri"></i></div>
    <div class="rb w57"><svg class="ic-big"><use href="#bx"/></svg><span class="lbl"><span class="lat">0-276</span>零</span><i class="tri"></i></div>
    <div class="rb w57"><svg class="ic-big"><use href="#bx"/></svg><span class="lbl"><span class="lat">0-276II</span></span><i class="tri"></i></div>
    <div class="rb w47"><svg class="ic-big"><use href="#fold"/></svg><span class="lbl"><span class="lat">0-</span>云<span class="lat">p</span></span><i class="tri"></i></div>
    <div class="rb w57"><svg class="ic-big"><use href="#fdx"/></svg><span class="lbl"><span class="lat">0-ams</span>零</span><i class="tri"></i></div>
    <div class="rb w63"><svg class="ic-big"><use href="#fdc"/></svg><span class="lbl"><span class="lat">0-bowl</span>零</span><i class="tri"></i></div>
    <div class="rb w56"><svg class="ic-big"><use href="#bxz"/></svg><span class="lbl"><span class="lat">0-box</span>建</span><i class="tri"></i></div>
  </div>

  <div class="midarea d-flex">
    <div class="sidecol">
      <div class="tabstrip d-flex">
        <div class="tabstub"><i></i></div>
        <svg class="ic"><use href="#tab1"/></svg>
        <svg class="ic ms-1"><use href="#tab2"/></svg>
        <svg class="ic ms-1"><use href="#tab3"/></svg>
      </div>
      <div class="d-flex">
        <div class="pane-a">
          <div class="upper">
            <div class="strip strip-tall">
              <i class="tri trim-l"></i>
              <div class="cell ms-1"><svg class="ic-tool"><use href="#treef"/></svg></div>
              <i class="dots"></i>
              <div class="cell"><svg class="ic-tool"><use href="#expd"/></svg></div>
              <div class="cell"><svg class="ic-tool"><use href="#coll"/></svg></div>
              <i class="tsep"></i>
              <div class="cell"><svg class="ic-tool"><use href="#lst"/></svg></div>
              <div class="cell"><svg class="ic-tool"><use href="#bk"/></svg></div>
              <div class="cell"><svg class="ic-tool"><use href="#fw"/></svg></div>
              <div class="cell ms-auto"><svg class="ic-tool"><use href="#cfg"/></svg></div>
            </div>
            <div class="tr in0"><svg class="ic-sm prt-a"><use href="#cube"/></svg><span class="lat">OFFSET_CURVE.PRT</span></div>
            <div class="tr in1"><i class="lnk lnk-far"></i><svg class="ic"><use href="#gr"/></svg><span>面组<span class="lat">1</span>（导入特征 标识<span class="lat">5</span>）</span></div>
            <div class="tr hd"><span>直接父项</span></div>
            <div class="tr in1"><i class="lnk lnk-far"></i><svg class="ic"><use href="#csys"/></svg><span class="lat">OFFSET_CURVE</span></div>
            <div class="tr hd"><span>当前</span></div>
            <div class="tr in1"><i class="lnk lnk-far"></i><svg class="ic"><use href="#imp"/></svg><span class="sel">导入特征 标识5</span></div>
          </div>
          <div class="strip mt-1">
            <i class="tri trim-l"></i>
            <div class="cell"><svg class="ic-tool"><use href="#dgn"/></svg></div>
            <i class="dots"></i>
            <div class="cell on"><svg class="ic-tool"><use href="#dsg"/></svg></div>
            <div class="cell ms-1"><svg class="ic-tool"><use href="#trc"/></svg></div>
            <i class="tsep"></i>
            <div class="cell"><svg class="ic-tool"><use href="#expd"/></svg></div>
            <div class="cell"><svg class="ic-tool"><use href="#coll"/></svg></div>
            <div class="cell on"><svg class="ic-tool"><use href="#tbe"/></svg></div>
            <i class="tsep"></i>
            <div class="cell"><svg class="ic-tool"><use href="#mdl"/></svg></div>
            <i class="tsep"></i>
            <div class="cell fw-bold">»</div>
            <div class="cell nar ms-auto"><svg class="ic-tool"><use href="#cfg"/></svg></div>
          </div>
          <div class="flt">
            <svg class="ic prt-a"><use href="#funl"/></svg>
            <div class="fbox fbox-a"><svg width="9" height="9"><use href="#xx"/></svg></div>
            <i class="tri ms-1"></i>
            <span class="plus ms-2">+</span>
          </div>
          <div>
            <div class="tr in0"><svg class="ic-sm prt-a"><use href="#cube"/></svg><span class="lat">OFFSET_CURVE.PRT</span></div>
            <div class="tr in1"><i class="twi twi-first"></i><svg class="ic"><use href="#dsg"/></svg><span>设计项</span></div>
            <div class="tr in2 guide"><i class="twi"></i><svg class="ic"><use href="#gr"/></svg><span>面组（<span class="lat">1</span>）</span></div>
            <div class="tr in3 guide"><i class="twi"></i><svg class="ic"><use href="#gr"/></svg><span>面组<span class="lat">1</span>（导入特征 标识<span class="lat">5</span>）</span></div>
            <div class="tr in4 guide"><i class="lnk"></i><svg class="ic"><use href="#imp"/></svg><span>导入特征 标识<span class="lat">5</span></span></div>
            <div class="tr in2"><i class="twi shut"></i><svg class="ic"><use href="#cubes"/></svg><span>主体（<span class="lat">1</span>）</span></div>
          </div>
        </div>
        <div class="vbar"></div>
        <div class="pane-b">
          <div class="strip">
            <i class="tri ms-1"></i>
            <div class="cell ms-1"><svg class="ic-tool"><use href="#cbg"/></svg></div>
            <i class="dots"></i>
            <div class="cell"><svg class="ic-tool"><use href="#expd"/></svg></div>
            <div class="cell"><svg class="ic-tool"><use href="#coll"/></svg></div>
            <div class="cell"><svg class="ic-tool"><use href="#tbe"/></svg></div>
            <i class="tsep"></i>
            <div class="cell"><svg class="ic-tool"><use href="#hnd"/></svg></div>
            <i class="tsep"></i>
            <div class="cell"><svg class="ic-tool"><use href="#fl"/></svg></div>
            <div class="cell"><svg class="ic-tool"><use href="#tbd"/></svg></div>
            <i class="tsep"></i>
            <div class="cell on"><svg class="ic-tool"><use href="#dsg"/></svg></div>
            <div class="cell"><svg class="ic-tool"><use href="#layr"/></svg></div>
            <div class="cell on"><svg class="ic-tool"><use href="#trh"/></svg></div>
            <div class="cell ms-auto"><svg class="ic-tool"><use href="#cfg"/></svg></div>
          </div>
          <div class="flt flt-up">
            <svg class="ic ms-1"><use href="#funl"/></svg>
            <div class="fbox fbox-b"><svg width="9" height="9"><use href="#xx"/></svg></div>
            <i class="tri ms-1"></i>
            <span class="plus ms-2">+</span>
          </div>
          <div class="emptyrow"></div>
          <div class="tr in6"><svg class="ic-sm"><use href="#cube"/></svg><span class="lat">OFFSET_CURVE.PRT</span></div>
          <div class="tr in5"><i class="lnk lnk-wide"></i><svg class="ic"><use href="#csys"/></svg><span class="lat">OFFSET_CURVE</span></div>
          <div class="tr in5"><i class="lnk lnk-wide"></i><svg class="ic"><use href="#imp"/></svg><span>导入特征 标识<span class="lat">5</span></span></div>
          <div class="greenline"></div>
        </div>
      </div>
    </div>

    <div class="viewcol">
      <div class="vport">
        <div class="bd1"></div><div class="bd2"></div><div class="bd3"></div><div class="bd4"></div><div class="bd5"></div>
        <svg class="modelpic" viewBox="0 0 1440 600">
          <defs>
            <clipPath id="mclip"><path d="M58 265C75 285 100 303 130 303C170 305 210 265 255 232C320 185 400 140 500 108C590 80 680 58 770 52C860 48 950 58 1030 80C1080 95 1120 122 1160 125C1210 125 1260 75 1330 70C1370 70 1392 100 1392 150C1390 200 1370 265 1290 272C1240 268 1180 225 1090 203C1000 185 900 190 800 225C720 252 650 285 595 330L595 355 505 428 480 430C450 470 420 520 395 545C370 565 335 565 315 545L120 340C90 305 50 275 58 265Z"/></clipPath>
          </defs>
          <g clip-path="url(#mclip)">
            <rect width="1440" height="600" fill="#99ccff"/>
            <path d="M510 100 775 40 890 195 660 285Z" fill="#9999ff"/>
            <path d="M775 40 985 60 1085 195 885 195Z" fill="#9999cc"/>
            <path d="M985 60 1075 90 1180 220 1085 195Z" fill="#6699cc"/>
            <path d="M1075 90 1130 115 1235 260 1180 220Z" fill="#6666cc"/>
            <path d="M1130 115 1145 118 1255 265 1235 260Z" fill="#6699cc"/>
            <path d="M1145 118 1190 115 1305 280 1255 265Z" fill="#9999cc"/>
            <path d="M1190 115 1228 100 1345 255 1305 280Z" fill="#9999ff"/>
            <path d="M100 300 170 298 375 555 340 565Z" fill="#9999ff"/>
            <path d="M100 300 145 305 345 560 315 555Z" fill="#9999cc"/>
            <path d="M110 305 125 310 320 550 290 520Z" fill="#6699cc"/>
            <path d="M40 255 118 305 285 505 320 550 120 340Z" fill="#666699"/>
            <path d="M580 240H595V258Z" fill="#9999ff"/>
            <path d="M192 285 400 535M118 305 285 505M1285 88 1380 200M1130 122 1240 250" stroke="#333" stroke-width="2.500" fill="none"/>
            <path d="M595 355 505 428 480 430" stroke="#333" stroke-width="3" fill="none"/>
          </g>
          <path d="M480 430C450 470 420 520 400 540M600 325C650 285 720 252 800 222C900 185 1000 182 1090 198C1180 222 1220 250 1255 265" fill="none" stroke="#ff0033" stroke-width="3" stroke-dasharray="14 6"/>
          <path d="M595 330C650 285 720 252 800 225C900 190 1000 185 1090 203C1180 225 1240 268 1290 272C1370 265 1390 200 1392 150C1392 100 1370 70 1330 70C1260 75 1210 125 1160 125C1120 122 1080 95 1030 80C950 58 860 48 770 52C680 58 590 80 500 108C400 140 320 185 255 232C210 265 170 305 130 303C100 303 75 285 58 265C50 275 85 298 120 340L315 545C335 565 370 565 395 545" fill="none" stroke="#00ffff" stroke-width="7"/>
        </svg>
        <svg class="ptr" viewBox="0 0 14 20"><path d="M1 1v15l4-3 3 6 3-1-3-6h5z" fill="#fff" stroke="#223" stroke-width="1"/></svg>
        <div class="floatbar">
          <div class="fb"><svg class="ic-cv"><use href="#v1"/></svg></div>
          <div class="fb"><svg class="ic-cv"><use href="#v2"/></svg></div>
          <div class="fb"><svg class="ic-cv"><use href="#v3"/></svg></div>
          <div class="fb"><svg class="ic-cv"><use href="#v4"/></svg></div>
          <div class="fb"><svg class="ic-cv"><use href="#v5"/></svg></div>
          <div class="fb"><svg class="ic-cv"><use href="#v6"/></svg></div>
          <div class="fb"><svg class="ic-cv"><use href="#v7"/></svg></div>
          <div class="fb"><svg class="ic-cv"><use href="#v8"/></svg></div>
          <div class="fb"><svg class="ic-cv"><use href="#v9"/></svg></div>
          <div class="fb on"><svg class="ic-cv"><use href="#v10"/></svg></div>
          <div class="fb"><svg class="ic-cv"><use href="#v11"/></svg></div>
          <div class="fb"><svg class="ic-cv"><use href="#v12"/></svg></div>
          <div class="fb"><svg class="ic-cv"><use href="#v13"/></svg></div>
          <div class="fb"><svg class="ic-cv"><use href="#v14"/></svg></div>
          <div class="fb"><svg class="ic-cv"><use href="#v15"/></svg></div>
          <div class="fb on"><svg class="ic-cv"><use href="#v16"/></svg></div>
          <div class="fb"><svg class="ic-cv"><use href="#v17"/></svg></div>
          <div class="fb"><svg class="ic-cv"><use href="#v18"/></svg></div>
          <div class="fb"><svg class="ic-cv"><use href="#v19"/></svg></div>
          <div class="fb"><svg class="ic-cv"><use href="#v20"/></svg></div>
          <div class="fb"><svg class="ic-cv"><use href="#v21"/></svg></div>
          <div class="fb"><svg class="ic-cv"><use href="#v22"/></svg></div>
          <div class="fb on"><svg class="ic-cv"><use href="#v23"/></svg></div>
          <div class="fb"><svg class="ic-cv"><use href="#v24"/></svg></div>
          <div class="fb"><svg class="ic-cv"><use href="#v25"/></svg></div>
          <div class="fb"><svg class="ic-cv"><use href="#v26"/></svg></div>
          <div class="fb"><svg class="ic-cv"><use href="#v27"/></svg></div>
        </div>
      </div>
      <div class="tabrow d-flex">
        <div class="nbtns"><span>◂◂</span><span>◂</span><span>▸</span><span>▸▸</span><div class="addt">+</div></div>
        <div class="tabcur">全部默认</div>
      </div>
    </div>
  </div>

  <div class="statusbar d-flex">
    <div class="sl"><i class="sstub"></i><svg class="ic"><use href="#glob"/></svg><svg class="ic"><use href="#pg"/></svg></div>
    <i class="sdot"></i><span class="lat">14:12</span><span class="smsg">将显示带边着色的模型</span>
    <div class="ms-auto d-flex align-items-center">
      <i class="vs me-1"></i><i class="vs"></i>
      <svg class="ic ms-2"><use href="#bino"/></svg><i class="tri ms-1"></i>
      <i class="vs mx-2"></i>
      <svg class="ic"><use href="#dash"/></svg><i class="tri ms-1"></i>
      <svg class="ic ms-2"><use href="#esel"/></svg>
      <span class="stxt">选择了 1 项</span>
      <div class="sinput">几何</div>
    </div>
  </div>
</div>
</body>
</html>
